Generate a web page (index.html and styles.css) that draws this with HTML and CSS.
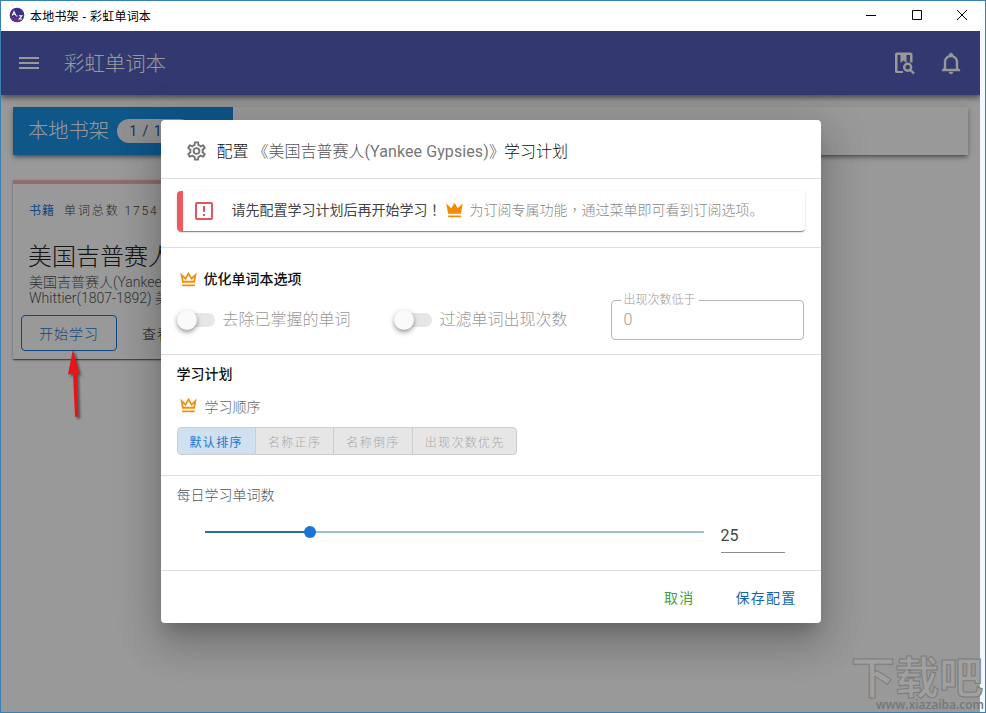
FILE: index.html
```html
<!DOCTYPE html>
<html lang="zh-CN">

<head>
    <meta charset="UTF-8">
    <meta name="viewport" content="width=device-width, initial-scale=1.0">
    <title>本地书架 - 彩虹单词本</title>
    <link rel="stylesheet" href="styles.css">
</head>

<body>

    <!-- Shared icons -->
    <svg class="sprite" width="0" height="0">
        <symbol id="crown-outline" viewBox="0 0 24 24">
            <path d="M12 8L15 13.2L18 10.5L17.3 14H6.7L6 10.5L9 13.2L12 8M12 4L8.5 10L3 5L5 16H19L21 5L15.5 10L12 4M19 18H5V19C5 19.6 5.4 20 6 20H18C18.6 20 19 19.6 19 19V18Z"/>
        </symbol>
        <symbol id="crown" viewBox="0 0 24 24">
            <path d="M5 16L3 5L8.5 10L12 4L15.5 10L21 5L19 16H5M19 19C19 19.6 18.6 20 18 20H6C5.4 20 5 19.6 5 19V18H19V19Z"/>
        </symbol>
    </svg>

    <div class="window">
        <!-- Title bar -->
        <div class="titlebar">
            <svg class="logo" viewBox="0 0 16 16">
                <circle cx="8" cy="8" r="7.3" fill="#3a3182"/>
                <path d="M1 9a7.2 7.2 0 0 0 13 3L9 11Z" fill="#6d2f86"/>
                <path d="M3.2 8.5L5 4.5L6.8 8.5M4 7.2H6M7 9H8.5M10 8.7H13L10.2 12H13" fill="none" stroke="#fff" stroke-width="1.1"/>
            </svg>
            <span class="window-title">本地书架 - 彩虹单词本</span>
            <div class="window-buttons">
                <svg viewBox="0 0 12 12"><path d="M1 6.5H11"/></svg>
                <svg viewBox="0 0 12 12"><path d="M1.5 1.5H10.5V10.5H1.5Z"/></svg>
                <svg viewBox="0 0 12 12"><path d="M1 1L11 11M11 1L1 11"/></svg>
            </div>
        </div>

        <div class="app">
            <header class="appbar">
                <svg class="menu" viewBox="0 0 20 12"><path d="M0 0H20V2H0ZM0 5H20V7H0ZM0 10H20V12H0Z"/></svg>
                <h1>彩虹单词本</h1>
                <svg class="icon" viewBox="0 0 24 24">
                    <path d="M4.500 1.500H18.500Q20.500 1.500 20.500 3.500V11.500H18V4H14.500V12L11.500 9.500L8.500 12V4H5.500V20H11V22H4.500Q3 22 3 20.500V3Q3 1.500 4.500 1.500ZM8.500 2H14.500V5H8.500Z"/>
                    <path class="lens" d="M19.200 16.200A3.500 3.500 0 1 1 12.200 16.200A3.500 3.500 0 1 1 19.200 16.200M18.200 18.800L22 22.500"/>
                </svg>
                <svg class="icon" viewBox="0 0 24 24">
                    <path stroke="#fff" stroke-width=".4" d="M10 21H14C14 22.100 13.100 23 12 23S10 22.100 10 21M21 19V20H3V19L5 17V11C5 7.900 7 5.200 10 4.300V4C10 2.900 10.900 2 12 2S14 2.900 14 4V4.300C17 5.200 19 7.900 19 11V17L21 19M17 11C17 8.200 14.800 6 12 6S7 8.200 7 11V18H17V11Z"/>
                </svg>
            </header>

            <main>
                <div class="shelf-bar">
                    <div class="shelf-tab">本地书架<span class="chip">1 / 1</span></div>
                </div>

                <div class="book">
                    <div class="book-meta"><b>书籍</b><span>单词总数 1754</span></div>
                    <h2>美国吉普赛人</h2>
                    <p>美国吉普赛人(Yankee<br>Whittier(1807-1892) 美</p>
                    <div class="book-actions">
                        <button class="start">开始学习</button>
                        <button>查看</button>
                    </div>
                </div>
            </main>

            <!-- Study plan dialog -->
            <div class="overlay">
                <div class="dialog">
                    <div class="dialog-title">
                        <svg viewBox="0 0 24 24"><path d="M12,8A4,4 0 0,1 16,12A4,4 0 0,1 12,16A4,4 0 0,1 8,12A4,4 0 0,1 12,8M12,10A2,2 0 0,0 10,12A2,2 0 0,0 12,14A2,2 0 0,0 14,12A2,2 0 0,0 12,10M10,22C9.750,22 9.540,21.820 9.500,21.580L9.130,18.930C8.500,18.680 7.960,18.340 7.440,17.940L4.950,18.950C4.730,19.030 4.460,18.950 4.340,18.730L2.340,15.270C2.210,15.050 2.270,14.780 2.460,14.630L4.570,12.970L4.500,12L4.570,11L2.460,9.370C2.270,9.220 2.210,8.950 2.340,8.730L4.340,5.270C4.460,5.050 4.730,4.960 4.950,5.050L7.440,6.050C7.960,5.660 8.500,5.320 9.130,5.070L9.500,2.420C9.540,2.180 9.750,2 10,2H14C14.250,2 14.460,2.180 14.500,2.420L14.870,5.070C15.500,5.320 16.040,5.660 16.560,6.050L19.050,5.050C19.270,4.960 19.540,5.050 19.660,5.270L21.660,8.730C21.790,8.950 21.730,9.220 21.540,9.370L19.430,11L19.500,12L19.430,13L21.540,14.630C21.730,14.780 21.790,15.050 21.660,15.270L19.660,18.730C19.540,18.950 19.270,19.040 19.050,18.950L16.560,17.950C16.040,18.340 15.500,18.680 14.870,18.930L14.500,21.580C14.460,21.820 14.250,22 14,22H10M11.250,4L10.880,6.610C9.680,6.860 8.620,7.500 7.850,8.390L5.440,7.350L4.690,8.650L6.800,10.200C6.400,11.370 6.400,12.640 6.800,13.800L4.680,15.360L5.430,16.660L7.860,15.620C8.630,16.500 9.680,17.140 10.870,17.380L11.240,20H12.760L13.130,17.390C14.320,17.140 15.370,16.500 16.140,15.620L18.570,16.660L19.320,15.360L17.200,13.810C17.600,12.640 17.600,11.370 17.200,10.200L19.310,8.650L18.560,7.350L16.150,8.390C15.380,7.500 14.320,6.860 13.120,6.620L12.750,4H11.250Z"/></svg>
                        <span>配置 </span><span class="book-name">《美国吉普赛人<span class="latin">(Yankee Gypsies)</span>》</span><span>学习计划</span>
                    </div>

                    <div class="section notice">
                        <div class="alert">
                            <svg class="alert-icon" viewBox="0 0 24 24"><path d="M19,19H5V5H19M19,3H5A2,2 0 0,0 3,5V19A2,2 0 0,0 5,21H19A2,2 0 0,0 21,19V5A2,2 0 0,0 19,3M11,15H13V17H11V15M11,7H13V13H11V7"/></svg>
                            <strong>请先配置学习计划后再开始学习<span class="mid-punct" lang="zh-TW">！</span></strong>
                            <svg class="crown"><use href="#crown"/></svg>
                            <span>为订阅专属功能<span class="mid-punct" lang="zh-TW">，</span>通过菜单即可看到订阅选项。</span>
                        </div>
                    </div>

                    <div class="section options">
                        <h3><svg class="crown"><use href="#crown-outline"/></svg>优化单词本选项</h3>
                        <div class="option-row">
                            <label class="switch"><i></i>去除已掌握的单词</label>
                            <label class="switch"><i></i>过滤单词出现次数</label>
                            <fieldset>
                                <legend>出现次数低于</legend>
                                <span>0</span>
                            </fieldset>
                        </div>
                    </div>

                    <div class="section plan">
                        <h3>学习计划</h3>
                        <div class="order"><svg class="crown"><use href="#crown-outline"/></svg>学习顺序</div>
                        <div class="toggle">
                            <button class="active">默认排序</button>
                            <button>名称正序</button>
                            <button>名称倒序</button>
                            <button>出现次数优先</button>
                        </div>
                    </div>

                    <div class="section daily">
                        <div class="label">每日学习单词数</div>
                        <div class="slider-row">
                            <div class="slider"><div class="fill" style="width: 21.1%"></div></div>
                            <div class="number">25</div>
                        </div>
                    </div>

                    <div class="actions">
                        <button class="cancel">取消</button>
                        <button class="save">保存配置</button>
                    </div>
                </div>
            </div>
        </div>

        <!-- Arrow pointing at the start button -->
        <svg class="arrow" viewBox="0 0 20 74">
            <path d="M6 2L12.500 27L10 26.500L11.300 69.500L8 70L6 26.500L1 27.500Z"/>
        </svg>

        <div class="watermark">
            <div class="mark-name">下载吧</div>
            <div class="mark-url">www.xiazaiba.com</div>
        </div>
    </div>

</body>

</html>
```
FILE: styles.css
```css
* {
    margin: 0;
    padding: 0;
    box-sizing: border-box;
}

body {
    width: 986px;
    height: 713px;
    overflow: hidden;
    font-family: Roboto, "Noto Sans CJK SC", sans-serif;
    font-weight: 300;
    color: #222;
}

button {
    font: inherit;
    color: inherit;
    background: none;
    border: none;
}

.sprite {
    position: absolute;
}

.window {
    position: relative;
    width: 986px;
    height: 713px;
    border: 1px solid #3a80b3;
    background-color: #f4f8fb;
}

/* Title bar */
.titlebar {
    display: flex;
    align-items: center;
    height: 30px;
    padding-left: 8px;
    padding-bottom: 2px;
    background-color: #fff;
}

.logo {
    width: 16px;
    height: 16px;
    margin-right: 5px;
}

.window-title {
    flex: 1;
    font-family: "Liberation Sans", "Noto Sans CJK SC", sans-serif;
    font-size: 12px;
    font-weight: 400;
    letter-spacing: 0.2px;
    color: #000;
}

.window-buttons {
    display: flex;
    gap: 33.5px;
    padding-right: 17px;
}

.window-buttons svg {
    width: 12px;
    height: 12px;
    fill: none;
    stroke: #000;
}

.app {
    position: relative;
    width: 979px;
    height: 681px;
    background-color: #fff;
    overflow: hidden;
}

/* App bar */
.appbar {
    display: flex;
    align-items: center;
    height: 64px;
    padding: 0 17px 0 18px;
    background-color: #525fbb;
    color: #fff;
    box-shadow: 0 2px 4px -1px rgba(0, 0, 0, 0.3), 0 4px 5px rgba(0, 0, 0, 0.22), 0 1px 10px rgba(0, 0, 0, 0.2);
}

.appbar svg {
    fill: #fff;
}

.appbar .menu {
    width: 20px;
    height: 12px;
    margin-right: 25px;
}

.appbar h1 {
    flex: 1;
    padding-bottom: 2px;
    font-size: 20.4px;
    font-weight: 300;
}

.appbar .icon {
    width: 24px;
    height: 24px;
    margin-left: 23px;
}

.appbar .lens {
    fill: none;
    stroke: #fff;
    stroke-width: 2.4;
}

/* Bookshelf */
main {
    padding: 12px;
}

.shelf-bar {
    height: 48px;
    margin-bottom: 25px;
    box-shadow: 0 3px 3px -2px rgba(0, 0, 0, 0.3), 0 3px 4px rgba(0, 0, 0, 0.2), 0 1px 8px rgba(0, 0, 0, 0.16);
}

.shelf-tab {
    display: flex;
    align-items: center;
    width: 220px;
    height: 48px;
    padding: 0 0 5px 15px;
    background-color: #198fe4;
    color: #fff;
    font-size: 20.3px;
}

.chip {
    width: 75px;
    height: 24px;
    margin: 5px 0 0 8px;
    padding-left: 12px;
    border-radius: 12px;
    background-color: #f1f1f1;
    color: #2a5a98;
    font-size: 14px;
    font-weight: 400;
    line-height: 24px;
    letter-spacing: 1px;
}

.book {
    width: 307px;
    height: 179px;
    padding: 0 8px;
    border-top: 4px solid #f2b6b6;
    box-shadow: 0 2px 1px -1px rgba(0, 0, 0, 0.3), 0 1px 1px rgba(0, 0, 0, 0.24), 0 1px 3px rgba(0, 0, 0, 0.22);
}

.book-meta {
    display: flex;
    gap: 9px;
    padding: 17px 8px 0;
    font-size: 12px;
    line-height: 20px;
    letter-spacing: 1.9px;
    color: #444;
}

.book-meta b {
    color: #1976d2;
    font-weight: 400;
    letter-spacing: 1px;
}

.book h2 {
    padding: 20px 7px 0;
    font-size: 24px;
    font-weight: 300;
    line-height: 32px;
}

.book p {
    height: 32px;
    margin: 1px 8px 0;
    font-size: 14px;
    line-height: 16px;
    color: #555;
}

.book-actions {
    display: flex;
    padding-top: 9px;
    font-size: 14px;
}

.book-actions button {
    width: 80px;
    height: 36px;
    letter-spacing: 1px;
}

.book-actions .start {
    width: 96px;
    border: 1px solid #1976d2;
    border-radius: 4px;
    color: #1976d2;
}

/* Dialog */
.overlay {
    position: absolute;
    inset: 0;
    display: flex;
    align-items: center;
    justify-content: center;
    background-color: rgba(0, 0, 0, 0.4);
}

.dialog {
    width: 660px;
    height: 503px;
    border-radius: 4px;
    background-color: #fff;
    box-shadow: 0 11px 15px -7px rgba(0, 0, 0, 0.2), 0 24px 38px 3px rgba(0, 0, 0, 0.14), 0 9px 46px 8px rgba(0, 0, 0, 0.12);
}

.dialog-title {
    display: flex;
    align-items: center;
    height: 59px;
    padding: 3px 24px 0;
    border-bottom: 1px solid #dedede;
    font-size: 16px;
    white-space: pre;
    color: #111;
}

.dialog-title svg {
    width: 23px;
    height: 24px;
    margin-right: 9px;
    fill: #757575;
}

.dialog-title > span {
    padding-bottom: 2px;
}

.dialog-title .book-name {
    margin-right: -1px;
    color: #555;
}

.book-name .latin {
    font-weight: 400;
    letter-spacing: 0.1px;
    color: #777;
}

.section {
    padding: 0 16px;
    border-bottom: 1px solid #dedede;
}

.crown {
    width: 23px;
    height: 22px;
    fill: #ed9113;
}

.notice {
    height: 69px;
    padding-top: 12px;
}

.alert {
    display: flex;
    align-items: center;
    height: 40px;
    padding-left: 9px;
    border-left: 6px solid #eb5a5a;
    border-radius: 4px;
    font-size: 14px;
    color: #888;
    white-space: nowrap;
    box-shadow: 0 2px 1px -1px rgba(0, 0, 0, 0.3), 0 1px 1px rgba(0, 0, 0, 0.2), 0 1px 3px rgba(0, 0, 0, 0.12);
}

.alert strong,
.alert > span {
    line-height: 20px;
    padding-bottom: 3px;
}

.alert-icon {
    width: 24px;
    height: 24px;
    margin-right: 16px;
    fill: #e0565a;
}

.alert strong {
    font-weight: 400;
    color: #444;
}

/* Punctuation centred in its square */
.mid-punct {
    font-family: "Noto Sans CJK TC", sans-serif;
}

.alert .crown {
    margin: 0 4px 2px 1px;
    fill: #f38b00;
}

.section h3 {
    display: flex;
    align-items: center;
    font-size: 14px;
    font-weight: 500;
    line-height: 22px;
    color: #111;
}

h3 .crown,
.order .crown {
    margin-right: 4px;
}

.options {
    height: 107px;
    padding-top: 20px;
}

.option-row {
    display: flex;
    align-items: flex-start;
}

.switch {
    display: flex;
    align-items: center;
    width: 217px;
    height: 40px;
    margin-top: 10px;
    font-size: 16px;
    line-height: 24px;
    color: #999;
}

.switch i {
    position: relative;
    width: 36px;
    height: 14px;
    margin: 0 8px 0 2px;
    border-radius: 7px;
    background-color: #e6e6e6;
}

.switch i::before {
    content: "";
    position: absolute;
    left: -2px;
    top: -3px;
    width: 20px;
    height: 20px;
    border-radius: 50%;
    background-color: #fafafa;
    box-shadow: 0 2px 4px -1px rgba(0, 0, 0, 0.3), 0 3px 5px rgba(0, 0, 0, 0.16), 0 1px 8px rgba(0, 0, 0, 0.1);
}

fieldset {
    width: 193px;
    height: 48px;
    margin-top: 2px;
    padding-left: 12px;
    border: 1px solid #b5b5b5;
    border-radius: 4px;
    font-size: 16px;
    line-height: 24px;
    color: #999;
}

legend {
    padding: 0 3px;
    margin-left: -3px;
    font-size: 12px;
    line-height: 16px;
}

.plan {
    height: 121px;
    padding-top: 8px;
}

.order {
    display: flex;
    align-items: center;
    height: 22px;
    margin-top: 10px;
    font-size: 14px;
    color: #666;
}

.order .crown {
    margin-right: 5px;
    margin-bottom: 2px;
}

.toggle {
    display: flex;
    width: 340px;
    height: 28px;
    margin-top: 10px;
    border: 1px solid #cecece;
    border-radius: 4px;
    background-color: #e6e6e6;
    overflow: hidden;
}

.toggle button {
    padding: 0 12px;
    border-left: 1px solid #cecece;
    font-size: 12px;
    letter-spacing: 1.35px;
    white-space: nowrap;
    color: #a8a8a8;
}

.toggle .active {
    border-left: none;
    background-color: #cfe0f1;
    color: #1976d2;
    font-weight: 400;
}

.daily {
    height: 95px;
    padding-top: 8px;
}

.daily .label {
    font-size: 14px;
    line-height: 22px;
    color: #555;
}

.slider-row {
    display: flex;
    align-items: flex-start;
    padding: 16px 20px 0 28px;
}

.slider {
    width: 499px;
    height: 2px;
    margin: 9px 17px 0 0;
    background-color: #96c0de;
}

.fill {
    position: relative;
    height: 2px;
    background-color: #2d719a;
}

.fill::after {
    content: "";
    position: absolute;
    right: -6px;
    top: -5px;
    width: 12px;
    height: 12px;
    border-radius: 50%;
    background-color: #1976d2;
}

.number {
    width: 64px;
    height: 31px;
    padding-top: 3px;
    border-bottom: 1px solid #8c8c8c;
    font-size: 16px;
    line-height: 22px;
    font-weight: 400;
    color: #444;
}

.actions {
    display: flex;
    justify-content: flex-end;
    height: 52px;
    padding-right: 24px;
    font-size: 14px;
    font-weight: 400;
}

.actions button {
    letter-spacing: 1.25px;
}

.cancel {
    margin-right: 41px;
    color: #43a047;
}

.save {
    color: #1565a8;
}

/* Arrow and watermark over the window */
.arrow {
    position: absolute;
    left: 66px;
    top: 346px;
    width: 20px;
    height: 74px;
    fill: #e8141a;
    filter: drop-shadow(2px 2px 1px rgba(0, 0, 0, 0.45));
}

.watermark {
    position: absolute;
    right: 0;
    bottom: 0;
    width: 134px;
    height: 60px;
    color: #a0a0a0;
    white-space: nowrap;
}

.mark-name {
    height: 46px;
    font-family: "Noto Sans CJK SC", sans-serif;
    font-size: 44px;
    font-weight: 700;
    line-height: 46px;
    -webkit-text-stroke: 1px #7c7c7c;
}

.mark-url {
    padding-left: 25px;
    font-family: "Open Sans", sans-serif;
    font-size: 12px;
    font-weight: 600;
    line-height: 14px;
    color: #777;
}
```
